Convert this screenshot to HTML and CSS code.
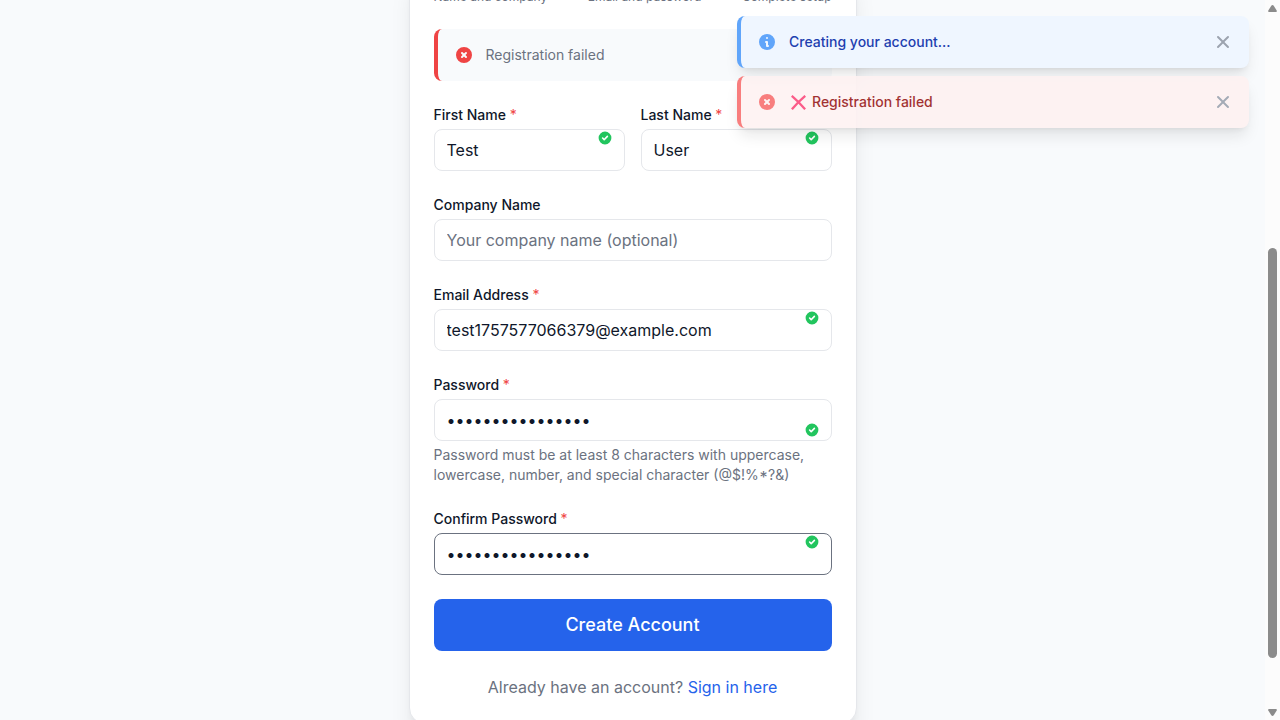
FILE: index.html
```html
<!DOCTYPE html>
<html lang="en">
<head>
<meta charset="utf-8">
<title>Create Account</title>
<link rel="stylesheet" href="styles.css">
</head>
<body>
<svg class="sprite" aria-hidden="true">
  <symbol id="i-check" viewBox="0 0 20 20"><path fill-rule="evenodd" d="M10 18a8 8 0 100-16 8 8 0 000 16zm3.707-9.293a1 1 0 00-1.414-1.414L9 10.586 7.707 9.293a1 1 0 00-1.414 1.414l2 2a1 1 0 001.414 0l4-4z"/></symbol>
  <symbol id="i-error" viewBox="0 0 20 20"><path fill-rule="evenodd" d="M10 18a8 8 0 100-16 8 8 0 000 16zM8.707 7.293a1 1 0 00-1.414 1.414L8.586 10l-1.293 1.293a1 1 0 101.414 1.414L10 11.414l1.293 1.293a1 1 0 001.414-1.414L11.414 10l1.293-1.293a1 1 0 00-1.414-1.414L10 8.586 8.707 7.293z"/></symbol>
  <symbol id="i-info" viewBox="0 0 20 20"><path fill-rule="evenodd" d="M18 10a8 8 0 11-16 0 8 8 0 0116 0zm-7-4a1 1 0 11-2 0 1 1 0 012 0zM9 9a1 1 0 000 2v3a1 1 0 001 1h1a1 1 0 100-2v-3a1 1 0 00-1-1H9z"/></symbol>
  <symbol id="i-close" viewBox="0 0 20 20"><path fill-rule="evenodd" d="M4.293 4.293a1 1 0 011.414 0L10 8.586l4.293-4.293a1 1 0 111.414 1.414L11.414 10l4.293 4.293a1 1 0 01-1.414 1.414L10 11.414l-4.293 4.293a1 1 0 01-1.414-1.414L8.586 10 4.293 5.707a1 1 0 010-1.414z"/></symbol>
</svg>
<div class="window">
  <main class="page">
    <section class="card">
      <div class="steps"><span>Name and company</span><span>Email and password</span><span>Complete setup</span></div>
      <div class="alert"><svg class="icon"><use href="#i-error"/></svg><p>Registration failed</p></div>
      <form class="form">
        <div class="row">
          <div class="field"><label for="first">First Name <b>*</b></label>
            <div class="control"><input id="first" type="text" value="Test"><svg class="valid"><use href="#i-check"/></svg></div></div>
          <div class="field"><label for="last">Last Name <b>*</b></label>
            <div class="control"><input id="last" type="text" value="User"><svg class="valid"><use href="#i-check"/></svg></div></div>
        </div>
        <div class="field"><label for="company">Company Name</label>
          <div class="control"><input id="company" type="text" placeholder="Your company name (optional)"></div></div>
        <div class="field"><label for="email">Email Address <b>*</b></label>
          <div class="control"><input id="email" type="text" value="test1757577066379@example.com"><svg class="valid"><use href="#i-check"/></svg></div></div>
        <div class="field"><label for="pw">Password <b>*</b></label>
          <div class="control"><input id="pw" type="password" value="TestPassword123!"><svg class="valid valid-low"><use href="#i-check"/></svg></div>
          <p class="hint">Password must be at least 8 characters with uppercase, lowercase, number, and special character (@$!%<span class="star">*</span>?&amp;)</p></div>
        <div class="field"><label for="confirm">Confirm Password <b>*</b></label>
          <div class="control"><input id="confirm" class="active" type="password" value="TestPassword123!"><svg class="valid"><use href="#i-check"/></svg></div></div>
        <button class="submit" type="button">Create Account</button>
      </form>
      <p class="signin">Already have an account? <a href="#">Sign in here</a></p>
    </section>
  </main>
  <div class="scrollbar">
    <svg class="arrow" viewBox="0 0 9 7"><path d="M4.5 0 Q5.2 0 5.7 .7 L8.7 5.4 Q9.2 7 8 7 H1 Q-.2 7 .3 5.4 L3.3 .7 Q3.8 0 4.5 0Z"/></svg>
    <div class="thumb"></div>
    <svg class="arrow arrow-down" viewBox="0 0 9 7"><path d="M4.5 7 Q5.2 7 5.7 6.3 L8.7 1.6 Q9.2 0 8 0 H1 Q-.2 0 .3 1.6 L3.3 6.3 Q3.8 7 4.5 7Z"/></svg>
  </div>
</div>
<div class="toasts">
  <div class="toast toast-info"><svg class="icon"><use href="#i-info"/></svg><p>Creating your account...</p><svg class="close"><use href="#i-close"/></svg></div>
  <div class="toast toast-error"><svg class="icon"><use href="#i-error"/></svg>
    <p><svg class="cross" viewBox="0 0 15 15"><path d="M1.6 1.6Q7 6.2 13.4 13.4M13.4 1.6Q7 7 1.6 13.4"/></svg>Registration failed</p><svg class="close"><use href="#i-close"/></svg></div>
</div>
</body>
</html>
```

FILE: styles.css
```css
* { box-sizing: border-box; margin: 0; }
body { height: 720px; overflow: hidden; background: #f8fafc; color: #0f172a; font: 16px/24px Inter, "Liberation Sans", sans-serif; }
svg { display: block; fill: currentColor; flex-shrink: 0; }
.sprite { position: absolute; width: 0; height: 0; }
.window { display: flex; height: 720px; }
.page { flex: 1; display: flex; justify-content: center; align-items: flex-start; height: 720px; overflow: hidden; }
.card { width: 448px; margin-top: -36px; padding: 24px; border: 1px solid #e5e7eb; border-radius: 16px; background: #fff; box-shadow: 0 20px 25px -5px rgba(0,0,0,.1), 0 8px 10px -6px rgba(0,0,0,.1); }
.steps { display: flex; justify-content: space-between; font-size: 12px; line-height: 16px; color: #6b7280; }
.alert { display: flex; gap: 12px; margin: 24px 0; padding: 16px; border-left: 4px solid #ef4444; border-radius: 8px; background: #f8fafc; font-size: 14px; line-height: 20px; color: #6b7280; }
.icon, .close { width: 20px; height: 20px; }
.alert .icon { color: #ef4444; }
.form { display: flex; flex-direction: column; gap: 24px; }
.row { display: grid; grid-template-columns: 1fr 1fr; gap: 16px; }
.field label { display: block; margin-bottom: 4px; font-size: 14px; font-weight: 500; line-height: 20px; }
.field b { font-weight: 400; color: #ef4444; }
.control { position: relative; }
input { display: block; width: 100%; height: 42px; padding: 8px 12px; border: 1px solid #e5e7eb; border-radius: 8px; background: #fff; color: #0f172a; font: 16px/24px Inter, "Liberation Sans", sans-serif; outline: none; }
input::placeholder { color: #6b7280; }
input.active { border-color: #6b7280; }
.valid { position: absolute; top: 1px; right: 12px; width: 16px; height: 16px; color: #22c55e; }
.valid-low { top: 23px; }
.hint { margin-top: 4px; font-size: 14px; line-height: 20px; color: #6b7280; }
.star { display: inline-block; margin: 0 1.2px; line-height: 14px; transform: translateY(2.5px) scale(1.15); }
.submit { height: 52px; border: 0; border-radius: 8px; background: #2563eb; color: #fff; font: 500 18px/28px Inter, "Liberation Sans", sans-serif; }
.signin { margin-top: 24px; text-align: center; color: #6b7280; }
.signin a { color: #2563eb; text-decoration: none; }
.scrollbar { display: flex; flex-direction: column; justify-content: space-between; width: 15px; padding: 5px 3px 4px; background: #fcfcfc; color: #8b8b8b; }
.arrow { width: 9px; height: 7px; }
.thumb { width: 9px; height: 410px; margin-top: 236px; margin-bottom: auto; border-radius: 5px; background: #8b8b8b; }
.toasts { position: absolute; top: 16px; right: 31px; display: flex; flex-direction: column; gap: 8px; width: 512px; }
.toast { display: flex; align-items: center; height: 52px; padding: 16px; border-left: 4px solid; border-radius: 8px; box-shadow: 0 10px 15px -3px rgba(0,0,0,.1), 0 4px 6px -4px rgba(0,0,0,.1); font-size: 14px; font-weight: 500; line-height: 20px; }
.toast p { display: flex; align-items: center; flex: 1; margin-left: 12px; }
.toast .close { color: #9ca3af; }
.toast-info { border-color: #60a5fa; background: #eff6ff; }
.toast-info .icon { color: #60a5fa; }
.toast-info p { color: #1e40af; }
.toast-error { border-color: #f87171; background: #fef2f2; opacity: .9; }
.toast-error .icon { color: #f87171; }
.toast-error p { color: #991b1b; }
.cross { width: 15px; height: 15px; margin: 0 6px 0 2px; fill: none; stroke: #fb4b7d; stroke-width: 2.3; stroke-linecap: square; }
```
